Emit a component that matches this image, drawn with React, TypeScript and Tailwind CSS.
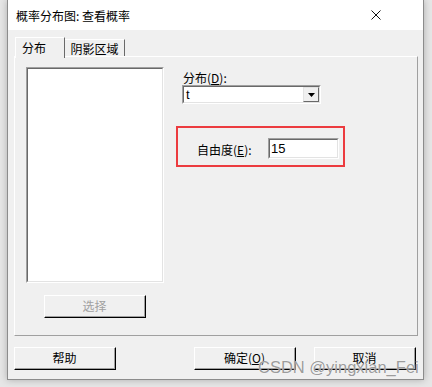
import React from "react";

function Raised({ className = "", children }: { className?: string; children?: React.ReactNode }) {
  return (
    <div className={`border-t border-l border-r border-b border-t-white border-l-white border-r-black border-b-black ${className}`}>
      <div className="h-full w-full border-r border-b border-r-[#a0a0a0] border-b-[#a0a0a0] flex items-center justify-center">
        {children}
      </div>
    </div>
  );
}

function Sunken({ className = "", children }: { className?: string; children?: React.ReactNode }) {
  return (
    <div className={`border-t border-l border-r border-b border-t-[#a0a0a0] border-l-[#a0a0a0] border-r-white border-b-white ${className}`}>
      <div className="h-full w-full border-t border-l border-r border-b border-t-[#696969] border-l-[#696969] border-r-[#e3e3e3] border-b-[#e3e3e3] bg-white flex items-center">
        {children}
      </div>
    </div>
  );
}

export default function App() {
  return (
    <div className="relative w-[432px] h-[387px] bg-[#e6e6e6] overflow-hidden font-['Noto_Sans_CJK_SC',sans-serif] text-[12px] text-black">
      {/* dialog window */}
      <div className="ml-[7px] w-[417px] h-[380px] flex flex-col border-l border-r border-b border-[#8c8c8c] shadow-[0_0_7px_rgba(0,0,0,0.25)]">
        {/* title bar */}
        <div className="h-[30px] bg-white flex items-center pl-[8px]">
          <span className="leading-[12px] mt-[1px]">概率分布图: 查看概率</span>
          <svg className="ml-auto mr-[42px]" width="10" height="10" viewBox="0 0 10 10">
            <path d="M0.5 0.5 L9.5 9.5 M9.5 0.5 L0.5 9.5" stroke="#111" strokeWidth="1" fill="none" />
          </svg>
        </div>

        {/* body */}
        <div className="flex-1 bg-[#f0f0f0] pt-[7px] px-[6px]">
          {/* tabs */}
          <div className="flex items-end h-[19px] ml-[1px]">
            <div className="relative z-10 h-[21px] -mb-[2px] w-[50px] bg-[#f0f0f0] border-t border-l border-r border-t-white border-l-white border-r-[#696969] flex items-start pl-[6px] pt-[4px]">
              <span className="leading-[12px]">分布</span>
            </div>
            <div className="h-[17px] w-[60px] border-t border-r border-t-white border-r-[#696969] flex items-center justify-center">
              <span className="leading-[12px] mt-[1px]">阴影区域</span>
            </div>
          </div>

          {/* tab panel */}
          <div className="h-[280px] w-[404px] border-t border-l border-r border-b border-t-white border-l-white border-r-[#a0a0a0] border-b-[#a0a0a0] flex">
            <div className="flex flex-col pl-[11px] pt-[10px]">
              <Sunken className="w-[138px] h-[216px]" />
              <Raised className="mt-[12px] ml-[18px] w-[102px] h-[23px]">
                <span className="text-[#a0a0a0] leading-[12px]">选择</span>
              </Raised>
            </div>

            <div className="flex flex-col ml-[12px] pt-[15px]">
              <span className="ml-[7px] leading-[12px]">
                分布(<span className="underline">D</span>):
              </span>
              <Sunken className="mt-[1px] ml-[6px] w-[139px] h-[19px]">
                <span className="pl-[2px] leading-[12px] font-['Liberation_Sans',sans-serif] text-[13px]">t</span>
                <div className="ml-auto h-[15px] w-[16px] bg-[#f0f0f0] border-t border-l border-r border-b border-t-[#e3e3e3] border-l-[#e3e3e3] border-r-[#696969] border-b-[#696969] flex items-center justify-center">
                  <svg width="7" height="4" viewBox="0 0 7 4">
                    <path d="M0 0 H7 L3.5 4 Z" fill="#000" />
                  </svg>
                </div>
              </Sunken>

              <div className="mt-[22px] w-[169px] h-[41px] border-2 border-[#ec3b3f] flex items-start pl-[19px] pr-[4px]">
                <span className="mt-[16px] leading-[12px]">
                  自由度(<span className="underline">E</span>):
                </span>
                <Sunken className="ml-auto mt-[10px] w-[71px] h-[21px]">
                  <span className="pl-[1px] leading-[12px] font-['Liberation_Sans',sans-serif] text-[13px]">15</span>
                </Sunken>
              </div>
            </div>
          </div>

          {/* bottom buttons */}
          <div className="flex mt-[11px]">
            <Raised className="w-[102px] h-[23px]">
              <span className="leading-[12px]">帮助</span>
            </Raised>
            <Raised className="ml-[78px] w-[102px] h-[23px]">
              <span className="leading-[12px]">
                确定(<span className="underline">O</span>)
              </span>
            </Raised>
            <Raised className="ml-[18px] w-[102px] h-[23px]">
              <span className="leading-[12px]">取消</span>
            </Raised>
          </div>
        </div>
      </div>

      {/* watermark */}
      <div className="absolute left-[258px] top-[359px] leading-none text-[16.5px] font-['Liberation_Sans',sans-serif] text-[#8f8f8f]/90 [text-shadow:0_0_1px_#ffffff]">
        CSDN @yingxian_Fei
      </div>
    </div>
  );
}
